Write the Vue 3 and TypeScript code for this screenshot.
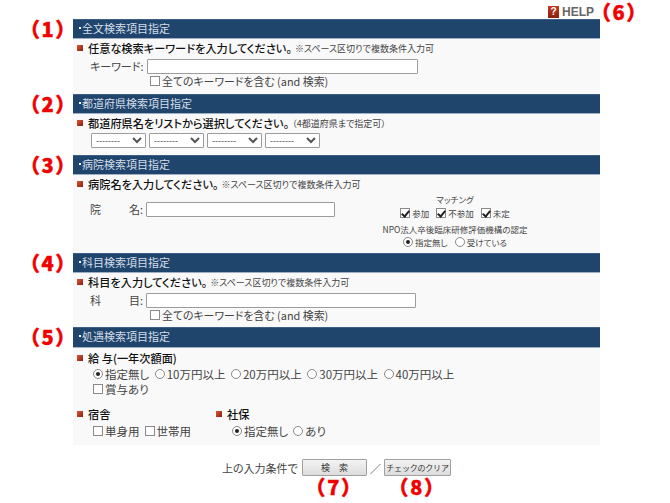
<script setup lang="ts">
interface Opt { label: string; checked?: boolean }
const prefs = [0, 1, 2, 3]
const pay: Opt[] = [
  { label: '指定無し', checked: true },
  { label: '10万円以上' },
  { label: '20万円以上' },
  { label: '30万円以上' },
  { label: '40万円以上' },
]
</script>

<template>
  <div class="page">
    <div class="help-row">
      <span class="help-icon">?</span>
      <span class="help-text">HELP</span>
      <span class="mark">（6）</span>
    </div>

    <section class="sec">
      <div class="side"><span class="mark">（1）</span></div>
      <div class="main">
        <h2 class="bar">全文検索項目指定</h2>
        <div class="body b1">
          <p class="title"><i class="bul"></i><b>任意な検索キーワードを入力してください。</b><small>※スペース区切りで複数条件入力可</small></p>
          <div class="field">
            <label class="lab">キーワード:</label>
            <input class="txt w-key" type="text" />
          </div>
          <label class="opt all"><input type="checkbox" class="chk" />全てのキーワードを含む (and 検索)</label>
        </div>
      </div>
    </section>

    <section class="sec">
      <div class="side"><span class="mark">（2）</span></div>
      <div class="main">
        <h2 class="bar">都道府県検索項目指定</h2>
        <div class="body b2">
          <p class="title"><i class="bul"></i><b>都道府県名をリストから選択してください。</b><small>（4都道府県まで指定可）</small></p>
          <div class="selects">
            <select v-for="p in prefs" :key="p" class="sel"><option>--------</option></select>
          </div>
        </div>
      </div>
    </section>

    <section class="sec">
      <div class="side"><span class="mark">（3）</span></div>
      <div class="main">
        <h2 class="bar">病院検索項目指定</h2>
        <div class="body b3">
          <p class="title"><i class="bul"></i><b>病院名を入力してください。</b><small>※スペース区切りで複数条件入力可</small></p>
          <div class="hosp">
            <div class="field hosp-field">
              <label class="lab spread"><span>院</span><span>名:</span></label>
              <input class="txt w-hosp" type="text" />
            </div>
            <div class="match">
              <div>マッチング</div>
              <div class="opts">
                <label class="opt"><input type="checkbox" class="chk on" checked />参加</label>
                <label class="opt"><input type="checkbox" class="chk on" checked />不参加</label>
                <label class="opt"><input type="checkbox" class="chk on" checked />未定</label>
              </div>
              <div class="npo">NPO法人卒後臨床研修評価機構の認定</div>
              <div class="opts">
                <label class="opt"><input type="radio" name="npo" class="rad" checked />指定無し</label>
                <label class="opt"><input type="radio" name="npo" class="rad" />受けている</label>
              </div>
            </div>
          </div>
        </div>
      </div>
    </section>

    <section class="sec">
      <div class="side"><span class="mark">（4）</span></div>
      <div class="main">
        <h2 class="bar">科目検索項目指定</h2>
        <div class="body b4">
          <p class="title"><i class="bul"></i><b>科目を入力してください。</b><small>※スペース区切りで複数条件入力可</small></p>
          <div class="field">
            <label class="lab spread"><span>科</span><span>目:</span></label>
            <input class="txt w-dept" type="text" />
          </div>
          <label class="opt all"><input type="checkbox" class="chk" />全てのキーワードを含む (and 検索)</label>
        </div>
      </div>
    </section>

    <section class="sec">
      <div class="side"><span class="mark">（5）</span></div>
      <div class="main">
        <h2 class="bar bar5">処遇検索項目指定</h2>
        <div class="body b5">
          <p class="title"><i class="bul"></i><b>給 与(一年次額面)</b></p>
          <div class="opts pay">
            <label v-for="o in pay" :key="o.label" class="opt big"><input type="radio" name="pay" class="rad" :checked="o.checked" />{{ o.label }}</label>
          </div>
          <div class="opts bonus">
            <label class="opt big"><input type="checkbox" class="chk" />賞与あり</label>
          </div>
          <div class="two">
            <div class="col-a">
              <p class="title"><i class="bul"></i><b>宿舎</b></p>
              <div class="opts sub">
                <label class="opt big"><input type="checkbox" class="chk" />単身用</label>
                <label class="opt big"><input type="checkbox" class="chk" />世帯用</label>
              </div>
            </div>
            <div class="col-b">
              <p class="title"><i class="bul"></i><b>社保</b></p>
              <div class="opts sub">
                <label class="opt big"><input type="radio" name="ins" class="rad" checked />指定無し</label>
                <label class="opt big"><input type="radio" name="ins" class="rad" />あり</label>
              </div>
            </div>
          </div>
        </div>
      </div>
    </section>

    <footer class="foot">
      <span class="foot-text">上の入力条件で</span>
      <div class="act a-search">
        <button class="btn" type="button">検　索</button>
        <span class="mark">（7）</span>
      </div>
      <span class="slash">／</span>
      <div class="act a-clear">
        <button class="btn btn-sm" type="button">チェックのクリア</button>
        <span class="mark">（8）</span>
      </div>
    </footer>
  </div>
</template>

<style>
html, body { margin: 0; background: #fff; }
</style>

<style scoped>
.page {
  width: 670px;
  height: 503px;
  overflow: hidden;
  font-family: "Noto Sans CJK JP", "Liberation Sans", sans-serif;
  font-size: 10.5px;
  font-feature-settings: "palt";
  color: #444;
}
.help-row {
  height: 19px;
  display: flex;
  align-items: center;
  box-sizing: border-box;
  padding-left: 548px;
  padding-top: 4px;
}
.help-icon {
  width: 11px;
  height: 12px;
  background: linear-gradient(#c33a1c, #8c1d0c);
  color: #fff;
  font: bold 10px/12px "Liberation Sans", sans-serif;
  text-align: center;
  flex: none;
}
.help-text {
  font: bold 12px "Liberation Sans", sans-serif;
  color: #666;
  margin-left: 3px;
  margin-right: 6px;
  width: 32px;
  flex: none;
}
.mark {
  color: #f00000;
  font-weight: 900;
  font-size: 20px;
  letter-spacing: 2.5px;
  line-height: 20px;
  white-space: nowrap;
  -webkit-text-stroke: 0.4px #f00000;
}
.sec { display: flex; }
.side { width: 73px; flex: none; padding-left: 29px; box-sizing: border-box; line-height: 20px; }
.main { width: 527px; flex: none; }
.bar {
  margin: 0;
  height: 20px;
  background: #20456d;
  box-shadow: inset 0 1px 0 #3c5f85;
  border-bottom: 1px solid #9fb0c4;
  box-sizing: border-box;
  color: #d5dde8;
  font-size: 11px;
  font-weight: 400;
  line-height: 19px;
  padding-left: 9px;
  position: relative;
}
.bar5 { height: 21px; }
.bar::before {
  content: "";
  position: absolute;
  left: 6px;
  top: 8px;
  width: 2px;
  height: 2px;
  background: #fff;
}
.body { background: #f9f9f9; box-sizing: border-box; padding: 1px 0 0 4px; }
.b1 { height: 55px; }
.b2 { height: 41px; }
.b3 { height: 78px; }
.b4 { height: 54px; }
.b5 { height: 97px; padding-top: 2px; }
.title {
  margin: 0;
  height: 16px;
  display: flex;
  align-items: center;
  white-space: nowrap;
}
.title b { font-size: 11.2px; font-weight: 500; color: #111; }
.title small { font-size: 9px; color: #444; margin-left: 3px; }
.bul {
  width: 6px;
  height: 6px;
  margin-right: 5px;
  background: linear-gradient(135deg, #d8593a, #8c1e0e);
  flex: none;
}
.field { display: flex; align-items: center; margin-left: 13px; margin-top: 2px; }
.lab { width: 53px; margin-right: 3px; white-space: nowrap; font-size: 11px; }
.spread { display: flex; justify-content: space-between; }
.txt {
  height: 15px;
  box-sizing: border-box;
  border: 1px solid #9c9c9c;
  background: #fff;
  padding: 0;
  margin: 0;
  border-radius: 1px;
}
.w-key { width: 271px; margin-left: 1px; }
.w-hosp { width: 189px; }
.w-dept { width: 270px; }
.opt {
  display: inline-flex;
  align-items: center;
  white-space: nowrap;
}
.all { margin-left: 73px; margin-top: -2px; font-size: 10.9px; height: 16px; }
.chk, .rad {
  appearance: none;
  margin: 0 2px 0 0;
  flex: none;
  box-sizing: border-box;
  background: #fff;
  position: relative;
}
.chk { width: 10px; height: 10px; border: 1px solid #8a8a8a; }
.chk:checked::after {
  content: "";
  position: absolute;
  left: 2px;
  top: 0;
  width: 3px;
  height: 6px;
  border: solid #222;
  border-width: 0 2px 2px 0;
  transform: rotate(40deg);
}
.rad { width: 10px; height: 10px; border: 1px solid #8a8a8a; border-radius: 50%; }
.rad:checked::after {
  content: "";
  position: absolute;
  left: 2px;
  top: 2px;
  width: 4px;
  height: 4px;
  border-radius: 50%;
  background: #222;
}
.selects { display: flex; gap: 3px; margin-left: 14px; margin-top: 2px; }
.sel {
  width: 55px;
  height: 15px;
  font-size: 9px;
  font-family: "Liberation Sans", sans-serif;
  padding: 0;
  box-sizing: border-box;
  border: 1px solid #9c9c9c;
  background: #fff;
  color: #555;
  border-radius: 1px;
}
.hosp { position: relative; }
.hosp-field { margin-top: 9px; }
.match {
  position: absolute;
  left: 303px;
  top: -8px;
  width: 150px;
  text-align: center;
  font-size: 8.5px;
  line-height: 13px;
}
.opts { display: flex; justify-content: center; gap: 4px; }
.match .opts { gap: 7px; height: 14px; }
.npo { margin-top: 3px; line-height: 12px; white-space: nowrap; }
.big { font-size: 11.5px; }
.pay { justify-content: flex-start; gap: 5.5px; margin: 0 0 0 16px; height: 16px; }
.bonus { justify-content: flex-start; margin-left: 16px; height: 13px; }
.two { display: flex; margin-top: 11px; }
.col-a { width: 139px; }
.sub { justify-content: flex-start; margin-left: 16px; gap: 5px; height: 17px; margin-top: 0; }
.foot {
  display: flex;
  align-items: flex-start;
  margin-top: 14px;
  padding-left: 222px;
}
.foot-text { font-size: 11px; width: 80px; line-height: 18px; }
.act { display: flex; flex-direction: column; align-items: center; }
.a-search { width: 65px; }
.a-clear { width: 67px; }
.btn {
  width: 100%;
  height: 17px;
  padding: 0;
  font-family: inherit;
  font-size: 9px;
  line-height: 15px;
  color: #333;
  box-sizing: border-box;
  border: 1px solid #a0a0a0;
  border-radius: 1px;
  background: linear-gradient(#f4f4f4, #dcdcdc);
  white-space: nowrap;
}
.btn-sm { font-size: 8px; letter-spacing: -0.2px; }
.act .mark { line-height: 20px; margin-top: 1px; }
.slash { width: 17px; text-align: center; font-size: 11px; line-height: 18px; color: #222; }
</style>
